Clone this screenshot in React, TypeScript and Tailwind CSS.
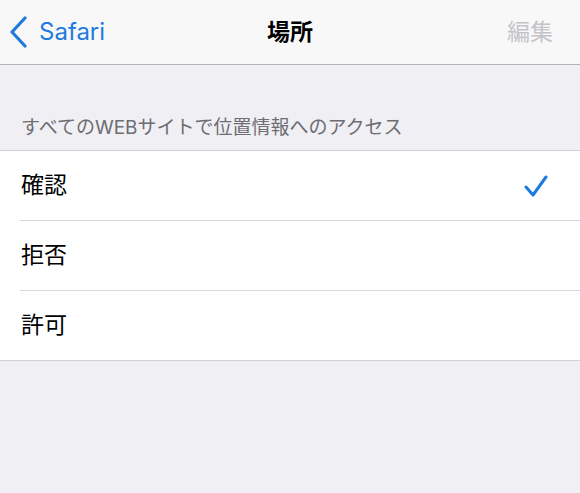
import { Fragment } from 'react'

const options = [
  { label: '確認', checked: true },
  { label: '拒否', checked: false },
  { label: '許可', checked: false },
]

const font = { fontFamily: 'Inter, "Noto Sans CJK JP", sans-serif' }

export default function App() {
  return (
    <div className="w-[580px] h-[493px] bg-[#efeff4] overflow-hidden" style={font}>
      {/* ナビゲーションバー */}
      <div className="h-[65px] bg-[#f8f8f8] border-b border-[#b4b4b8] grid grid-cols-[1fr_auto_1fr] items-center px-[9px]">
        <div className="flex items-center gap-[10px] text-[#1f7ae0]">
          <svg width="20" height="32" viewBox="0 0 20 32" fill="none" stroke="currentColor">
            <path d="M16 2L3 16l13 14" strokeWidth={3.2} strokeLinecap="round" strokeLinejoin="round" />
          </svg>
          <span className="text-[24px] leading-none">Safari</span>
        </div>
        <div className="text-[23px] font-semibold text-black leading-none">場所</div>
        <div className="flex justify-end pr-[18px]">
          <span className="text-[23px] text-[#c4c4c8] leading-none">編集</span>
        </div>
      </div>

      {/* セクションヘッダー */}
      <div className="pt-[52px] pb-[11px] px-[21px] text-[19px] leading-[22px] text-[#6d6d72]">
        すべてのWEBサイトで位置情報へのアクセス
      </div>

      {/* 選択リスト */}
      <div className="bg-white border-y border-[#d2d2d6]">
        {options.map((o, i) => (
          <Fragment key={o.label}>
            {i > 0 && <div className="ml-[20px] h-px bg-[#d8d8dc]" />}
            <div className="h-[69px] flex items-center justify-between pl-[21px] pr-[32px]">
              <span className="text-[23px] text-black leading-none">{o.label}</span>
              {o.checked && (
                <svg width="24" height="22" viewBox="0 0 24 22" fill="none" stroke="#1f7ae0">
                  <path d="M2 12l7 8L22 2" strokeWidth={3} strokeLinecap="round" strokeLinejoin="round" />
                </svg>
              )}
            </div>
          </Fragment>
        ))}
      </div>
    </div>
  )
}
